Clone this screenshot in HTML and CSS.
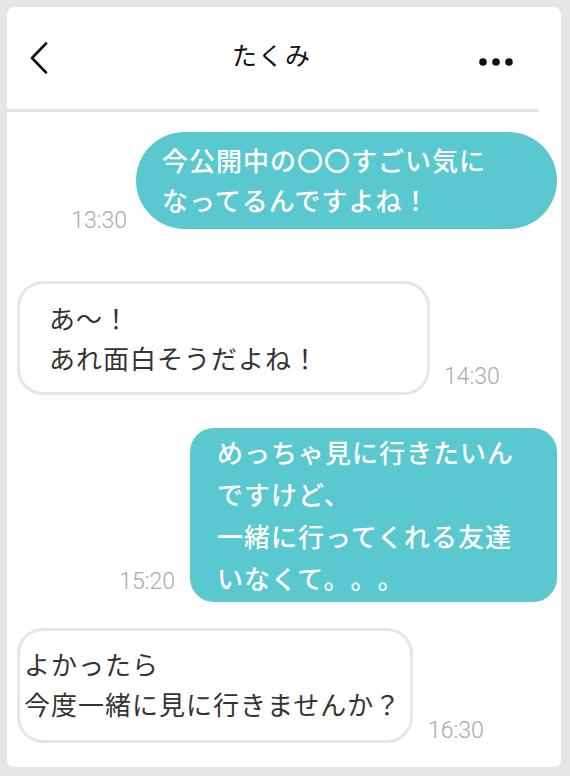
FILE: index.html
```html
<!DOCTYPE html>
<html lang="ja">
<head>
<meta charset="utf-8">
<title>たくみ</title>
<link rel="stylesheet" href="styles.css">
</head>
<body>
<div class="frame">
  <div class="screen">
    <header class="header">
      <svg class="back" width="18" height="32" viewBox="0 0 18 32"><polyline points="16,1.5 2,16 16,30.5" fill="none" stroke="#111" stroke-width="2.6" stroke-linecap="round" stroke-linejoin="round"/></svg>
      <div class="title">たくみ</div>
      <svg class="more" width="34" height="8" viewBox="0 0 34 8"><circle cx="4" cy="4" r="3.8" fill="#111"/><circle cx="17" cy="4" r="3.8" fill="#111"/><circle cx="30" cy="4" r="3.8" fill="#111"/></svg>
    </header>
    <div class="divider"></div>
    <main class="chat">
      <div class="row sent row1">
        <span class="time">13:30</span>
        <div class="bubble teal b1">今公開中の〇〇すごい気に<br>なってるんですよね！</div>
      </div>
      <div class="row recv row2">
        <div class="bubble white b2">あ〜！<br>あれ面白そうだよね！</div>
        <span class="time">14:30</span>
      </div>
      <div class="row sent row3">
        <span class="time">15:20</span>
        <div class="bubble teal b3">めっちゃ見に行きたいん<br>ですけど、<br>一緒に行ってくれる友達<br>いなくて。。。</div>
      </div>
      <div class="row recv row4">
        <div class="bubble white b4">よかったら<br>今度一緒に見に行きませんか？</div>
        <span class="time">16:30</span>
      </div>
    </main>
  </div>
</div>
</body>
</html>
```

FILE: styles.css
```css
* { box-sizing: border-box; }
html, body { margin: 0; padding: 0; }
body {
  width: 570px;
  height: 776px;
  background: #e6e6e6;
  font-family: "Noto Sans CJK JP", "Noto Sans", sans-serif;
  overflow: hidden;
}
.frame {
  padding: 7px 9px 9px 7px;
  height: 776px;
}
.screen {
  background: #fff;
  border-radius: 7px;
  height: 100%;
  overflow: hidden;
}
.header {
  height: 102px;
  display: flex;
  align-items: center;
  padding: 0 48px 0 23px;
}
.back { display: block; }
.title {
  flex: 1;
  text-align: center;
  padding-left: 16px;
  font-size: 25px;
  letter-spacing: 1px;
  color: #111;
  margin-top: -8px;
}
.more { display: block; margin-top: 8px; }
.divider {
  height: 3px;
  background: #e4e4e4;
  margin-right: 22px;
}
.chat {
  padding: 20px 4px 0 10px;
  display: flex;
  flex-direction: column;
}
.row {
  display: flex;
  align-items: flex-end;
}
.row.sent { justify-content: flex-end; }
.row.recv { justify-content: flex-start; }
.row2 { margin-top: 52px; }
.row3 { margin-top: 33px; }
.row4 { margin-top: 26px; }
.bubble {
  font-size: 26px;
  letter-spacing: 1px;
  line-height: 40px;
  white-space: nowrap;
  text-spacing-trim: space-all;
}
.teal {
  background: #59c8cf;
  color: #fff;
  font-weight: 500;
}
.white {
  background: #fff;
  border: 3px solid #e6e6e6;
  color: #333;
}
.b1 {
  width: 421px;
  height: 97px;
  border-radius: 49px;
  padding: 8px 0 0 26px;
}
.b2 {
  width: 413px;
  height: 114px;
  border-radius: 26px;
  padding: 14px 0 0 29px;
}
.b3 {
  width: 367px;
  height: 174px;
  border-radius: 24px;
  padding: 3px 0 0 27px;
  line-height: 42px;
}
.b4 {
  width: 396px;
  height: 115px;
  border-radius: 26px;
  padding: 13px 0 0 4px;
}
.time {
  font-family: Roboto, "Liberation Sans", sans-serif;
  font-weight: 300;
  font-size: 23px;
  color: #a9a9a9;
  line-height: 26px;
}
.row1 .time { margin-right: 9px; margin-bottom: -5px; }
.row2 .time { margin-left: 14px; margin-bottom: 5px; }
.row3 .time { margin-right: 15px; margin-bottom: 7px; }
.row4 .time { margin-left: 15px; margin-bottom: -1px; }
```
